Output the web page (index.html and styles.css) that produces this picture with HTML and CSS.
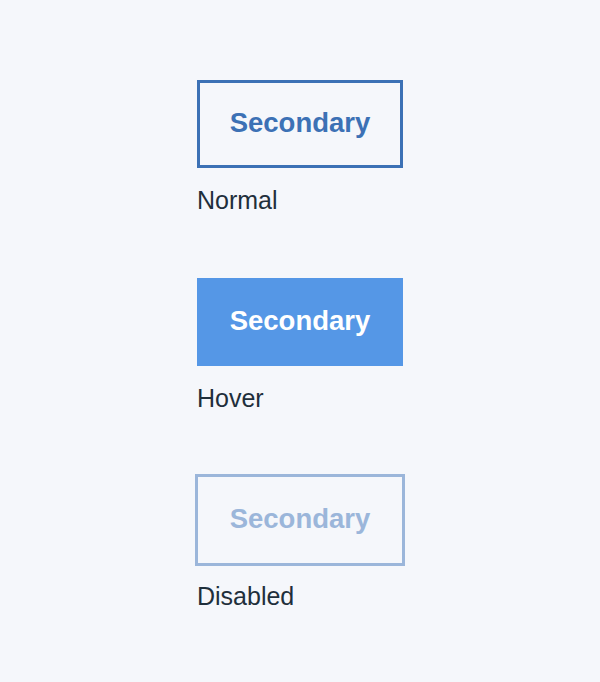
FILE: index.html
```html
<!DOCTYPE html>
<html>
<head>
<meta charset="utf-8">
<link rel="stylesheet" href="styles.css">
</head>
<body>
<div class="states">
  <div class="state">
    <div class="btn btn-normal">Secondary</div>
    <div class="label">Normal</div>
  </div>
  <div class="state">
    <div class="btn btn-hover">Secondary</div>
    <div class="label">Hover</div>
  </div>
  <div class="state">
    <div class="btn btn-disabled">Secondary</div>
    <div class="label">Disabled</div>
  </div>
</div>
</body>
</html>
```
FILE: styles.css
```css
html, body {
  margin: 0;
  padding: 0;
  background: #f5f7fb;
}
body {
  width: 600px;
  height: 682px;
  font-family: "Liberation Sans", Arial, sans-serif;
}
.states {
  display: flex;
  flex-direction: column;
  gap: 63px;
  padding: 80px 0 0 197px;
}
.state {
  display: flex;
  flex-direction: column;
  align-items: flex-start;
}
.btn {
  box-sizing: border-box;
  width: 206px;
  height: 88px;
  display: flex;
  align-items: center;
  justify-content: center;
  font-size: 27.5px;
  font-weight: 700;
  padding-bottom: 2px;
  line-height: 32px;
}
.btn-normal {
  border: 3px solid #3c71b5;
  color: #3c71b5;
}
.btn-hover {
  background: #5597e6;
  color: #ffffff;
}
.btn-disabled {
  width: 210px;
  height: 92px;
  margin: -2px;
  border: 3px solid #9bb6da;
  color: #9bb6da;
}
.label {
  margin-top: 17px;
  font-size: 25px;
  line-height: 30px;
  color: #1f2f3b;
}
```
